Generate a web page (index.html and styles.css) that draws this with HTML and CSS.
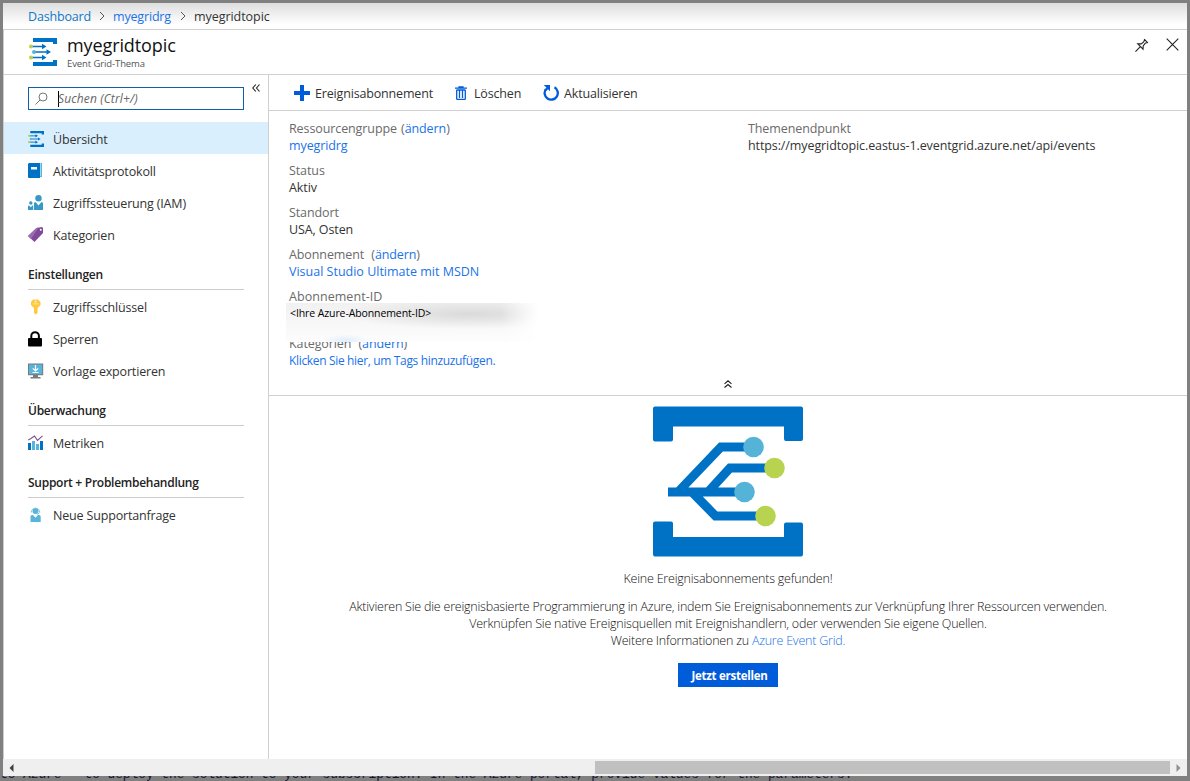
FILE: index.html
```html
<!DOCTYPE html>
<html lang="de">
<head>
<meta charset="utf-8">
<title>myegridtopic</title>
<link rel="stylesheet" href="styles.css">
</head>
<body>
<svg class="defs" width="0" height="0">
  <symbol id="grid-topic" viewBox="0 0 28 28">
    <path fill="#0072c6" d="M4 0h24v6h-4V4H4zM4 28h24v-6h-4v2H4z"/>
    <path stroke="#0072c6" stroke-width="1.6" fill="none" d="M3 8.500h11M6 14h12M3 19.500h11"/>
    <path fill="#0072c6" d="M13 5.700l4.500 2.800-4.500 2.800zM17.500 11.200l4.500 2.800-4.500 2.800zM13 16.700l4.500 2.800-4.500 2.800z"/>
    <circle cx="2" cy="8.500" r="2" fill="#b4d24b"/><circle cx="5" cy="14" r="2" fill="#59b4d9"/><circle cx="2" cy="19.500" r="2" fill="#b4d24b"/>
  </symbol>
</svg>
<div class="window">
  <nav class="crumbs">
    <a class="c1">Dashboard</a>
    <svg width="6" height="10" viewBox="0 0 6 10"><path d="M1 1l4 4-4 4" fill="none" stroke="#555"/></svg>
    <a class="c2">myegridrg</a>
    <svg width="6" height="10" viewBox="0 0 6 10"><path d="M1 1l4 4-4 4" fill="none" stroke="#555"/></svg>
    <span class="c3">myegridtopic</span>
  </nav>
  <header class="head">
    <svg class="logo" width="28" height="28"><use href="#grid-topic"/></svg>
    <div class="titles">
      <h1>myegridtopic</h1>
      <p>Event Grid-Thema</p>
    </div>
    <svg class="pin" width="14" height="14" viewBox="0 0 15 15" fill="none" stroke="#222" stroke-width="1.200"><path d="M.5 14.500L5.500 9.500M9.800 1.200l4 4M10.300 1.700L9.300 4.200 6.700 6.300 3 6.300l5.600 5.600.2-3.500 2.200-2.800 2.400-.7"/></svg>
    <svg width="13" height="13" viewBox="0 0 13 13" stroke="#222" stroke-width="1.100"><path d="M.7.700l11.600 11.600M12.300.7L.7 12.300"/></svg>
  </header>
  <div class="body">
    <aside class="side">
      <div class="searchrow">
        <div class="search">
          <svg width="13" height="13" viewBox="0 0 13 13" fill="none" stroke="#777"><circle cx="8" cy="5" r="4"/><path d="M5.200 7.800L.5 12.500"/></svg>
          <i class="caret"></i><span>Suchen (Ctrl+/)</span>
        </div>
        <svg class="collapse" width="8" height="8" viewBox="0 0 8 8" fill="none" stroke="#222" stroke-width="1.100"><path d="M3.800.5L.8 4l3 3.500M7.500.5l-3 3.500 3 3.500"/></svg>
      </div>
      <ul class="menu">
        <li class="on"><svg width="16" height="16" viewBox="0 0 28 28"><use href="#grid-topic"/></svg><span>Übersicht</span></li>
        <li><svg width="16" height="16" viewBox="0 0 16 16"><path fill="#59b4d9" d="M2 0h12v14H2z"/><path fill="#a6d5ea" d="M12 0h1v13h-1z"/><path fill="#0072c6" d="M0 .8L1.200 0H12v15H1a1 1 0 0 1-1-1z"/><path fill="#fff" d="M3 4h6v2.500H3z"/></svg><span>Aktivitätsprotokoll</span></li>
        <li><svg width="16" height="16" viewBox="0 0 16 16" fill="#3999c6"><circle cx="10.500" cy="3.200" r="3.200"/><path d="M6 15V8.500Q6 7 7.500 7l3 3.500L13.500 7Q15 7 15 8.500V15z"/><circle cx="2.800" cy="8" r="1.700"/><path d="M0 15v-3.500q0-1 1-1l1.800 1.800 1.600-1.800h.8V15z"/></svg><span>Zugriffssteuerung (IAM)</span></li>
        <li><svg width="16" height="16" viewBox="0 0 16 16"><path fill="#804998" d="M0 9L8.500 1 14 0l1 1v5L6.500 15z"/><path fill="#9a6bb0" d="M0 9L8.500 1l2-.4L3 12z"/><circle cx="12.800" cy="2.700" r="1" fill="#fff"/></svg><span>Kategorien</span></li>
      </ul>
      <h2>Einstellungen</h2>
      <ul class="menu">
        <li><svg width="16" height="16" viewBox="0 0 16 16"><path fill="#ffc83d" d="M5 .5h5l2.500 2.600v3L9.500 9v5L7.700 15.500 6 14V9L3 6V3z"/><path fill="#fff3cf" d="M7.600 1.300l1.200 1.200-1.200 1.200-1.200-1.200zM5 4.500h5.400v.8H5z"/></svg><span>Zugriffsschlüssel</span></li>
        <li><svg width="16" height="16" viewBox="0 0 16 16"><path d="M3.300 8V5a3.800 3.800 0 0 1 7.600 0v3" fill="none" stroke="#000" stroke-width="2"/><rect y="7" width="14" height="8.500" rx="1"/></svg><span>Sperren</span></li>
        <li><svg width="16" height="16" viewBox="0 0 16 16"><path fill="#7a7a7a" d="M0 .5h15.200v11.700H0zM5 12h5v2h2.500v1.400H2.500V14H5z"/><path fill="#59b4d9" d="M1 1.500h13.200v9.700H1z"/><path stroke="#fff" stroke-width="1.200" fill="none" d="M7.500 2v6M4.800 5.300l2.700 2.700 2.700-2.700M4.500 9.500h6"/></svg><span>Vorlage exportieren</span></li>
      </ul>
      <h2>Überwachung</h2>
      <ul class="menu">
        <li><svg width="16" height="16" viewBox="0 0 16 16"><path fill="#0072c6" d="M0 8h3v7H0zM12 6h3v9h-3z"/><path fill="#59b4d9" d="M4 6h3v9H4zM8 9h3v6H8z"/><path fill="none" stroke="#804998" stroke-width="1.100" d="M0 5l3-1.500L6.500 1l3 4.500L14.500.8"/></svg><span>Metriken</span></li>
      </ul>
      <h2>Support + Problembehandlung</h2>
      <ul class="menu">
        <li><svg width="16" height="16" viewBox="0 0 16 16"><circle cx="7.500" cy="4" r="3" fill="#59b4d9"/><path fill="none" stroke="#7fc4e0" d="M3.200 5.500a4.300 4.300 0 1 1 8.600 0M11.500 6L9 7.500"/><path fill="#59b4d9" d="M2.500 15V9.500Q2.500 8 4 8h1l2.500 2.800L10 8h1.200q1.500 0 1.500 1.500V15z"/></svg><span>Neue Supportanfrage</span></li>
      </ul>
    </aside>
    <main class="main">
      <div class="bar">
        <svg class="plus" width="16" height="16" viewBox="0 0 16 16"><path fill="#015cda" d="M6 0h4v6h6v4h-6v6H6v-6H0V6h6z"/></svg>
        <span class="b1">Ereignisabonnement</span>
        <svg class="trash" width="12" height="14" viewBox="0 0 12 14"><path fill="none" stroke="#015cda" stroke-width="1.300" d="M0 2.200h12M4 2V.8h4V2M1.700 4v8.700q0 .6.600.6h7.400q.6 0 .6-.6V4M4.500 4.500v7.500M7.500 4.500v7.500M1.500 4h9"/></svg>
        <span class="b2">Löschen</span>
        <svg class="refresh" width="16" height="16" viewBox="0 0 16 16"><path fill="none" stroke="#015cda" stroke-width="2.300" d="M11.500 2.300A6.600 6.600 0 1 1 3 4"/><path fill="#015cda" d="M.8 0H7v6.200L5 4.300 3 6.200 1.500 5l2-2.200z"/></svg>
        <span class="b3">Aktualisieren</span>
      </div>
      <section class="props">
        <dl>
          <dt><span>Ressourcengruppe</span> <span class="chg">(<a>ändern</a>)</span></dt><dd><a>myegridrg</a></dd>
          <dt>Status</dt><dd>Aktiv</dd>
          <dt>Standort</dt><dd>USA, Osten</dd>
          <dt><span>Abonnement</span> <span class="chg wide">(<a>ändern</a>)</span></dt><dd><a class="sub">Visual Studio Ultimate mit MSDN</a></dd>
          <dt class="subid">Abonnement-ID</dt>
          <dd class="masked"><span>&lt;Ihre Azure-Abonnement-ID&gt;</span></dd>
          <dt><span>Kategorien</span> <span class="chg wide">(<a>ändern</a>)</span></dt><dd><a class="tags">Klicken Sie hier, um Tags hinzuzufügen.</a></dd>
        </dl>
        <dl>
          <dt>Themenendpunkt</dt><dd>https://myegridtopic.eastus-1.eventgrid.azure.net/api/events</dd>
        </dl>
        <svg class="fold" width="8" height="8" viewBox="0 0 8 8" fill="none" stroke="#222" stroke-width="1.100"><path d="M.5 3.800L4 .8l3.500 3M.5 7.500L4 4.500l3.500 3"/></svg>
      </section>
      <section class="empty">
        <svg width="150" height="151" viewBox="0 -0.500 150 151">
          <path fill="#0072c6" d="M2 0h146q2 0 2 2v30.500q0 2-2 2h-15q-2 0-2-2V20H20v13q0 2-2 2H2q-2 0-2-2V2q0-2 2-2zM2 150q-2 0-2-2V117q0-2 2-2h16q2 0 2 2v13.500h111V118q0-2 2-2h15q2 0 2 2v30q0 2-2 2z"/>
          <path fill="none" stroke="#0072c6" stroke-width="9" d="M15 85.500h77M25 85.500L68 40.500h34M55 85.500L77 61.500h44M39 85.500L62.500 109.500h50"/>
          <circle cx="100.500" cy="40.500" r="10.300" fill="#54b3d6"/><circle cx="121.500" cy="61.500" r="10.300" fill="#b8d34f"/><circle cx="91.500" cy="85.500" r="10.300" fill="#54b3d6"/><circle cx="112.500" cy="109.500" r="10.300" fill="#b8d34f"/>
        </svg>
        <p class="e0">Keine Ereignisabonnements gefunden!</p>
        <p>Aktivieren Sie die ereignisbasierte Programmierung in Azure, indem Sie Ereignisabonnements zur Verknüpfung Ihrer Ressourcen verwenden.</p>
        <p>Verknüpfen Sie native Ereignisquellen mit Ereignishandlern, oder verwenden Sie eigene Quellen.</p>
        <p>Weitere Informationen zu <a>Azure Event Grid.</a></p>
        <button>Jetzt erstellen</button>
      </section>
    </main>
  </div>
  <div class="scroll">
    <svg width="5" height="8" viewBox="0 0 5 8"><path fill="#404040" d="M4.500 0v8L.5 4z"/></svg>
    <div class="thumb"></div>
    <svg width="5" height="8" viewBox="0 0 5 8"><path fill="#909090" d="M.5 0v8l4-4z"/></svg>
  </div>
</div>
<div class="behind"><pre>to Azure   to deploy the solution to your subscription. In the Azure portal, provide values for the parameters.</pre></div>
</body>
</html>
```
FILE: styles.css
```css
* { box-sizing: border-box; margin: 0; padding: 0; }
body { width: 1190px; height: 781px; overflow: hidden; background: #808080; padding: 3px 3px 0; font: 12.5px/17px "Open Sans", "Noto Sans", sans-serif; color: #333; letter-spacing: -0.17px; }
a { color: #1a73e8; }
ul { list-style: none; }
svg { display: block; flex: none; }
span, p, h1, h2, a { white-space: nowrap; }
.defs { position: absolute; }
.window { height: 773px; background: #fff; display: flex; flex-direction: column; }
.crumbs { height: 27px; border-bottom: 1px solid #d0d0d0; background: linear-gradient(#dedede, #fff 22px); display: flex; align-items: center; padding-left: 25px; }
.crumbs svg { margin: 0 8px 0 9px; }
.crumbs .c1 { color: #0f78c8; width: 62px; }
.crumbs .c2 { width: 58px; }
.crumbs .c3 { letter-spacing: -0.05px; }
.head { height: 45px; border-bottom: 1px solid #d0d0d0; border-left: 1px solid #ccc; display: flex; padding: 8px 8px 0 25px; }
.titles { margin-left: 10px; flex: 1; }
h1 { font-size: 18px; line-height: 18px; font-weight: 400; color: #111; margin-top: -2px; letter-spacing: -0.1px; }
.titles p { font-size: 9.500px; line-height: 13px; margin-top: 3px; color: #555; letter-spacing: -0.1px; }
.pin { margin-right: 17px; }
.body { flex: 1; display: flex; border-left: 1px solid #ccc; min-height: 0; }
.side { width: 265px; flex: none; border-right: 1px solid #d0d0d0; }
.searchrow { display: flex; padding: 12px 0 0 24px; height: 47px; }
.search { width: 216px; height: 23px; border: 1px solid #0f5fae; display: flex; align-items: center; padding-left: 6px; font-size: 12px; letter-spacing: 0.12px; font-style: italic; color: #666; }
.search span { margin-left: -1px; }
.caret { width: 1px; height: 16px; background: #000; margin-left: 10px; }
.collapse { margin: -3px 0 0 8px; }
.menu li { height: 32px; display: flex; align-items: center; padding: 2px 0 0 24px; }
.menu li svg { margin-right: 9px; }
.menu .on { background: #daeffe; }
h2 { font-size: 12px; font-weight: 600; height: 40px; line-height: 17px; padding-top: 16px; margin: 0 24px; border-bottom: 1px solid #ccc; color: #222; letter-spacing: -0.27px; }
.main { flex: 1; min-width: 0; display: flex; flex-direction: column; }
.bar { height: 36px; border-bottom: 1px solid #d0d0d0; display: flex; align-items: center; padding: 1px 0 0 25px; color: #333; }
.plus { margin-right: 5px; }
.trash { margin-right: 7px; }
.refresh { margin-right: 5px; }
.b1 { width: 140px; }
.b2 { width: 69px; }
.props { height: 285px; border-bottom: 1px solid #d0d0d0; padding: 9px 0 0 20px; display: flex; position: relative; letter-spacing: -0.1px; }
.props dl { width: 459px; flex: none; }
.props dl + dl { width: 400px; }
dt { color: #6a6a6a; height: 17px; }
dd { height: 17px; margin-bottom: 8px; }
.subid { letter-spacing: 0.05px; }
.chg { margin-left: 1px; }
.chg.wide { margin-left: 4px; }
.sub { letter-spacing: 0; }
.tags { font-size: 12px; letter-spacing: -0.34px; }
dd.masked { height: 39px; margin: -2px 0 -7px -3px; width: 260px; background: linear-gradient(90deg, rgba(255,255,255,0) 215px, #fff 252px), radial-gradient(ellipse 24px 7px at 60px 38px, #deeefc, rgba(255,255,255,0)), radial-gradient(ellipse 130px 15px at 185px 11px, #dadada, rgba(255,255,255,0)), linear-gradient(#f1f1f1, #fdfdfd); font-size: 10.500px; color: #000; padding: 2px 0 0 4px; position: relative; }
.fold { position: absolute; left: 455px; top: 269px; }
.empty { display: flex; flex-direction: column; align-items: center; padding-top: 10px; }
.empty p { height: 17px; font-weight: 300; letter-spacing: -0.22px; color: #111; }
.empty .e0 { margin: 13px 0 11px; }
button { width: 100px; height: 24px; margin-top: 14px; border: 0; background: #015cda; color: #fff; font: 700 11.500px/24px "Open Sans", sans-serif; letter-spacing: -0.27px; padding: 1px 0 0 3px; }
.scroll { height: 17px; background: #efefef; display: flex; align-items: center; padding: 0 6px; }
.thumb { width: 575px; height: 13px; background: #c0c0c0; margin: 0 6px 0 auto; }
.behind { height: 5px; overflow: hidden; margin-left: -3px; }
.behind pre { font: 12.800px/14px "Liberation Mono", monospace; color: #141432; margin-top: -8px; letter-spacing: 0; }
```
